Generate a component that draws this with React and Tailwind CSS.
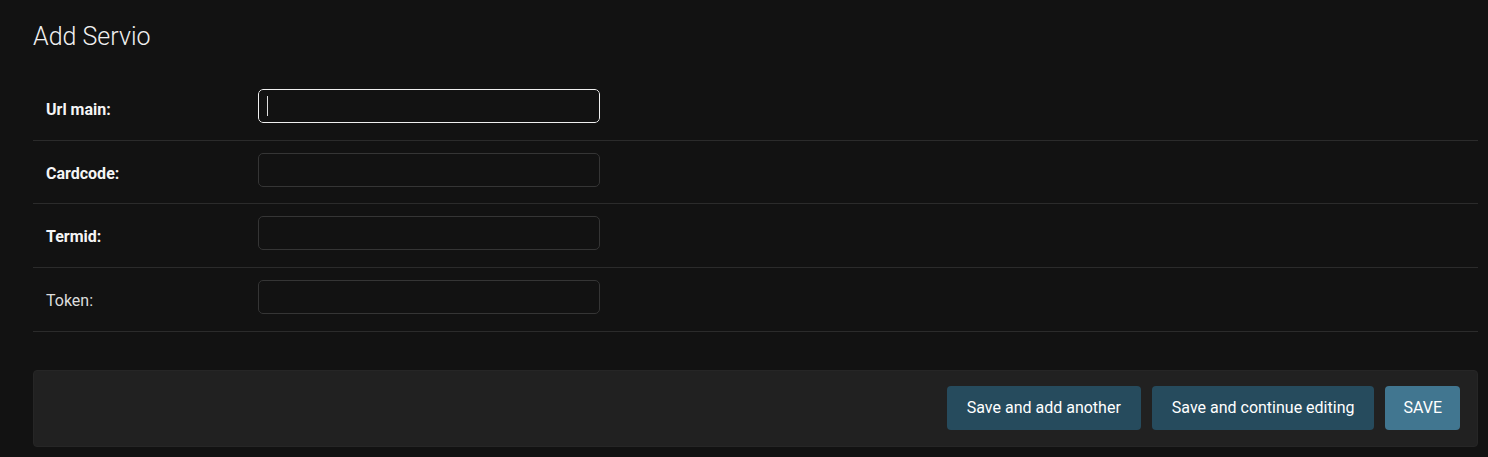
import React from "react";

const FIELDS = [
  { name: "url_main", label: "Url main:", required: true, focused: true },
  { name: "cardcode", label: "Cardcode:", required: true },
  { name: "termid", label: "Termid:", required: true },
  { name: "token", label: "Token:", required: false },
];

export default function App() {
  return (
    <div
      className="min-h-[457px] bg-[#121212] text-[#eeeeee] px-[33px] pt-[20px]"
      style={{ fontFamily: "Roboto, 'Liberation Sans', sans-serif" }}
    >
      {/* Title */}
      <h1 className="text-[25px] font-light leading-[34px] text-[#f0f0f0]">Add Servio</h1>

      {/* Fieldset */}
      <div className="mt-[23px] mr-[-23px]">
        {FIELDS.map((f) => (
          <div
            key={f.name}
            className="flex items-center border-b border-[#2b2b2b] pt-[12px] pb-[16.67px] pl-[13px]"
          >
            <label
              className={`w-[212px] text-[16px] pt-[8px] ${
                f.required ? "font-bold text-[#f5f5f5]" : "font-normal text-[#dddddd]"
              }`}
            >
              {f.label}
            </label>
            <div
              className={`w-[342px] h-[34px] rounded-[5px] bg-[#121212] flex items-center px-[8px] ${
                f.focused ? "border-[1.5px] border-[#f0f0f0] outline outline-1 outline-[#121212]" : "border border-[#353535]"
              }`}
            >
              {f.focused && <span className="w-px h-[20px] bg-[#dddddd]" />}
            </div>
          </div>
        ))}
      </div>

      {/* Submit row */}
      <div className="mt-[38px] mr-[-23px] bg-[#212121] border border-[#262626] rounded-[4px] flex justify-end gap-[11px] pt-[15px] pb-[16px] pr-[17px]">
        <button className="h-[44px] px-[20px] rounded-[4px] bg-[#264b5d] text-[16px] text-white">
          Save and add another
        </button>
        <button className="h-[44px] px-[20px] rounded-[4px] bg-[#264b5d] text-[16px] text-white">
          Save and continue editing
        </button>
        <button className="h-[44px] px-[18px] rounded-[4px] bg-[#417690] text-[16px] text-white">
          SAVE
        </button>
      </div>
    </div>
  );
}
